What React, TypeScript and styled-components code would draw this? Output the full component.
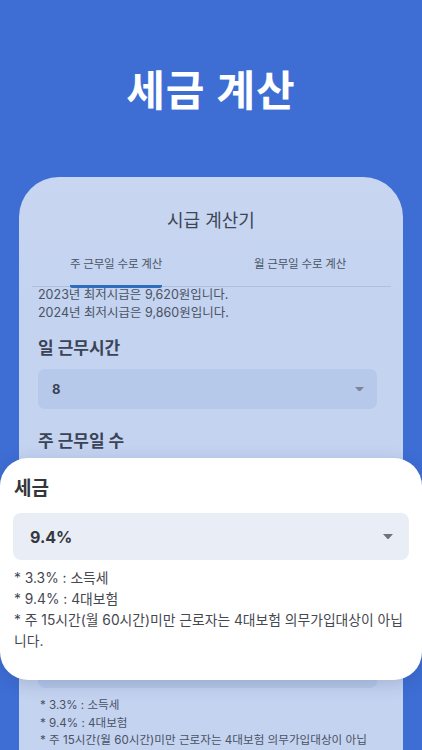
import React from "react";
import styled, { createGlobalStyle } from "styled-components";

const GlobalStyle = createGlobalStyle`
  html, body {
    margin: 0;
    padding: 0;
    background: #3e6ed4;
  }
  body {
    font-family: Inter, "Noto Sans CJK KR", "Noto Sans", sans-serif;
  }
  * {
    box-sizing: border-box;
  }
`;

const Arrow = ({ color, size }: { color: string; size: number }) => (
  <svg width={size} height={size * 0.55} viewBox="0 0 10 5.5">
    <polygon points="0,0 10,0 5,5.5" fill={color} />
  </svg>
);

const App = () => {
  return (
    <>
      <GlobalStyle />
      <Screen>
        <Hero>세금 계산</Hero>
        <Phone>
          <PhoneTitle>시급 계산기</PhoneTitle>
          <Tabs>
            <Tab>
              <TabLabel active>주 근무일 수로 계산</TabLabel>
            </Tab>
            <Tab>
              <TabLabel>월 근무일 수로 계산</TabLabel>
            </Tab>
          </Tabs>
          <Divider />
          <Body>
            <Info>
              <div>2023년 최저시급은 9,620원입니다.</div>
              <div>2024년 최저시급은 9,860원입니다.</div>
            </Info>
            <Label>일 근무시간</Label>
            <Select>
              <span>8</span>
              <Arrow color="#7d8699" size={9} />
            </Select>
            <Label>주 근무일 수</Label>
            <Select>
              <span>5</span>
              <Arrow color="#7d8699" size={9} />
            </Select>
            <Label>시급</Label>
            <Select>
              <span>9,860</span>
            </Select>
            <Label>세금</Label>
            <Select>
              <span>9.4%</span>
              <Arrow color="#7d8699" size={9} />
            </Select>
            <SmallNotes>
              <div>* 3.3% : 소득세</div>
              <div>* 9.4% : 4대보험</div>
              <div>* 주 15시간(월 60시간)미만 근로자는 4대보험 의무가입대상이 아닙니다.</div>
            </SmallNotes>
          </Body>
        </Phone>
        <Popup>
          <PopupLabel>세금</PopupLabel>
          <PopupSelect>
            <span>9.4%</span>
            <Arrow color="#6f7278" size={10} />
          </PopupSelect>
          <Notes>
            <div>* 3.3% : 소득세</div>
            <div>* 9.4% : 4대보험</div>
            <div>* 주 15시간(월 60시간)미만 근로자는 4대보험 의무가입대상이 아닙니다.</div>
          </Notes>
        </Popup>
      </Screen>
    </>
  );
};

export default App;

const Screen = styled.div`
  position: relative;
  width: 422px;
  height: 750px;
  overflow: hidden;
  background: #3e6ed4;
  display: flex;
  flex-direction: column;
`;

const Hero = styled.div`
  height: 177px;
  display: flex;
  align-items: center;
  justify-content: center;
  padding-bottom: 2px;
  color: #ffffff;
  font-size: 42px;
  font-weight: 700;
  letter-spacing: 1px;
`;

const Phone = styled.div`
  flex: 1;
  margin: 0 19px;
  background: linear-gradient(#c8d6f1, #c4d3f0 120px);
  border-radius: 40px 40px 0 0;
  padding-top: 32px;
  overflow: hidden;
`;

const PhoneTitle = styled.div`
  text-align: center;
  font-size: 18px;
  line-height: 24px;
  color: #3e4656;
  margin-bottom: 23px;
`;

const Tabs = styled.div`
  display: flex;
  margin: 0 11px 0 5px;
`;

const Tab = styled.div`
  flex: 1;
  display: flex;
  justify-content: center;
`;

const TabLabel = styled.div<{ active?: boolean }>`
  font-size: 11.5px;
  line-height: 16px;
  color: #4b5466;
  letter-spacing: -0.2px;
  padding-bottom: 13px;
  border-bottom: 3px solid ${(p) => (p.active ? "#2e6cbd" : "transparent")};
  border-radius: 2px;
  margin-bottom: -2px;
  position: relative;
`;

const Divider = styled.div`
  height: 1px;
  margin: 0 12px 0 13px;
  background: #aebfdf;
`;

const Body = styled.div`
  padding: 0 26px 0 19px;
`;

const Info = styled.div`
  font-size: 12.5px;
  line-height: 18px;
  color: #4a5263;
  margin-top: -1px;
  margin-bottom: 14px;
`;

const Label = styled.div`
  font-size: 17px;
  font-weight: 700;
  line-height: 24px;
  color: #3b4356;
  margin-bottom: 9px;
`;

const Select = styled.div`
  height: 40px;
  border-radius: 7px;
  background: #b6c9ea;
  display: flex;
  align-items: center;
  justify-content: space-between;
  padding: 0 13px 0 14px;
  margin-bottom: 20px;
  font-size: 13px;
  font-weight: 700;
  color: #3a4256;
`;

const SmallNotes = styled.div`
  margin-top: -11px;
  padding-left: 2px;
  font-size: 11.6px;
  line-height: 17.5px;
  color: #4a5263;
`;

const Popup = styled.div`
  position: absolute;
  left: 0;
  right: 0;
  top: 458px;
  background: #ffffff;
  border-radius: 28px;
  box-shadow: 0 4px 18px rgba(20, 40, 90, 0.18);
  padding: 18px 13px 28px;
`;

const PopupLabel = styled.div`
  font-size: 19px;
  font-weight: 700;
  line-height: 26px;
  color: #33363d;
  padding-left: 1px;
  margin-bottom: 11px;
`;

const PopupSelect = styled.div`
  height: 47px;
  border-radius: 8px;
  background: #e9eef6;
  display: flex;
  align-items: center;
  justify-content: space-between;
  padding: 0 16px 0 17px;
  font-size: 16px;
  font-weight: 700;
  color: #34373e;
  margin-bottom: 8px;
`;

const Notes = styled.div`
  padding: 0 2px 0 1px;
  font-size: 13.8px;
  line-height: 21px;
  color: #45484f;
`;
